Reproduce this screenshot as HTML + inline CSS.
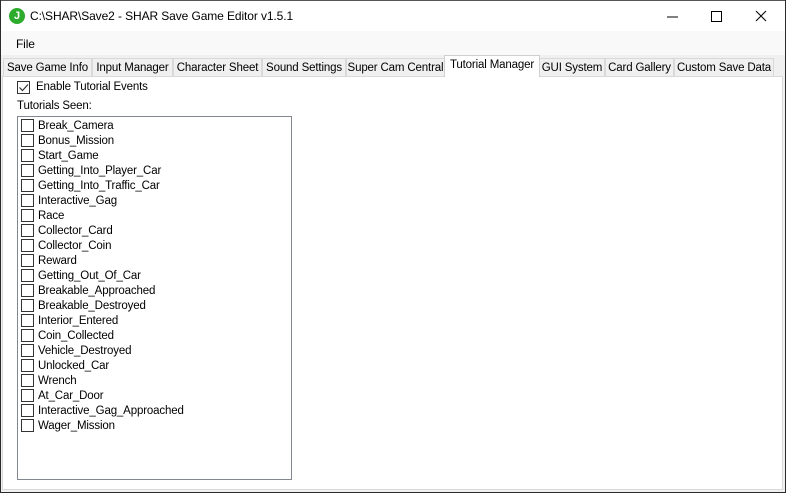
<!DOCTYPE html>
<html><head><style>
*{margin:0;padding:0;box-sizing:border-box}
body{width:786px;height:493px;overflow:hidden;background:#f0f0f0;font-family:"Liberation Sans",sans-serif;font-size:11.5px;letter-spacing:-0.15px;color:#000;position:relative}
.bl{position:absolute;background:#2b2b2b}
.title{position:absolute;left:0;top:0;width:786px;height:31px;background:#fff;border-top:1px solid #555}
.title .t{position:absolute;left:30px;top:8px;font-size:12px;letter-spacing:-0.1px}
.icon{position:absolute;left:9px;top:7px;width:16px;height:16px;border-radius:50%;background:#2dab2d;color:#fff;font-weight:bold;font-size:11px;text-align:center;line-height:16px}
.menu{position:absolute;left:1px;top:31px;width:784px;height:24px;background:#f9f9f9}
.menu span{position:absolute;left:15px;top:6px;font-size:12px}
.tab{position:absolute;top:58px;height:19px;border:1px solid #d9d9d9;border-bottom:none;background:#f0f0f0;text-align:center;line-height:19px;white-space:nowrap;overflow:hidden}
.tab.sel{top:55px;height:22px;background:#fff;border-color:#d0d0d0;z-index:2;line-height:19px}
.panel{position:absolute;left:2px;top:76px;width:781px;height:414px;background:#fff;border:1px solid #d9d9d9}
.cb{position:absolute;width:13px;height:13px;border:1px solid #333;background:#fff}
.list{position:absolute;left:17px;top:116px;width:275px;height:364px;border:1px solid #828790;background:#fff}
.item{position:absolute;left:3px;height:15px}
.item .cb{left:0;top:1px}
.item span{position:absolute;left:17px;top:1px;white-space:nowrap;line-height:15px}
</style></head><body>
<div class="title"><div class="icon">J</div><div class="t">C:\SHAR\Save2 - SHAR Save Game Editor v1.5.1</div>
<svg style="position:absolute;left:660px;top:8px" width="120" height="16"><line x1="7" y1="8" x2="18" y2="8" stroke="#000"/><rect x="51.5" y="2.5" width="10" height="10" fill="none" stroke="#000"/><path d="M96 2L106 12M106 2L96 12" stroke="#000"/></svg></div>
<div class="menu"><span>File</span></div>
<div class="tab" style="left:3px;width:89px">Save Game Info</div>
<div class="tab" style="left:92px;width:81px">Input Manager</div>
<div class="tab" style="left:173px;width:89px">Character Sheet</div>
<div class="tab" style="left:262px;width:84px">Sound Settings</div>
<div class="tab" style="left:346px;width:99px">Super Cam Central</div>
<div class="tab sel" style="left:444px;width:96px">Tutorial Manager</div>
<div class="tab" style="left:539px;width:66px">GUI System</div>
<div class="tab" style="left:605px;width:69px">Card Gallery</div>
<div class="tab" style="left:674px;width:100px">Custom Save Data</div>
<div class="panel"></div>
<div class="cb" style="left:17px;top:81px"><svg width="11" height="11" style="position:absolute;left:0;top:0"><path d="M1.5 5.5L4.5 8.5L10 2.5" fill="none" stroke="#333" stroke-width="1.2"/></svg></div>
<div style="position:absolute;left:36px;top:81px">Enable Tutorial Events</div>
<div style="position:absolute;left:17px;top:100px">Tutorials Seen:</div>
<div class="list">
<div class="item" style="top:1px"><div class="cb"></div><span>Break_Camera</span></div>
<div class="item" style="top:16px"><div class="cb"></div><span>Bonus_Mission</span></div>
<div class="item" style="top:31px"><div class="cb"></div><span>Start_Game</span></div>
<div class="item" style="top:46px"><div class="cb"></div><span>Getting_Into_Player_Car</span></div>
<div class="item" style="top:61px"><div class="cb"></div><span>Getting_Into_Traffic_Car</span></div>
<div class="item" style="top:76px"><div class="cb"></div><span>Interactive_Gag</span></div>
<div class="item" style="top:91px"><div class="cb"></div><span>Race</span></div>
<div class="item" style="top:106px"><div class="cb"></div><span>Collector_Card</span></div>
<div class="item" style="top:121px"><div class="cb"></div><span>Collector_Coin</span></div>
<div class="item" style="top:136px"><div class="cb"></div><span>Reward</span></div>
<div class="item" style="top:151px"><div class="cb"></div><span>Getting_Out_Of_Car</span></div>
<div class="item" style="top:166px"><div class="cb"></div><span>Breakable_Approached</span></div>
<div class="item" style="top:181px"><div class="cb"></div><span>Breakable_Destroyed</span></div>
<div class="item" style="top:196px"><div class="cb"></div><span>Interior_Entered</span></div>
<div class="item" style="top:211px"><div class="cb"></div><span>Coin_Collected</span></div>
<div class="item" style="top:226px"><div class="cb"></div><span>Vehicle_Destroyed</span></div>
<div class="item" style="top:241px"><div class="cb"></div><span>Unlocked_Car</span></div>
<div class="item" style="top:256px"><div class="cb"></div><span>Wrench</span></div>
<div class="item" style="top:271px"><div class="cb"></div><span>At_Car_Door</span></div>
<div class="item" style="top:286px"><div class="cb"></div><span>Interactive_Gag_Approached</span></div>
<div class="item" style="top:301px"><div class="cb"></div><span>Wager_Mission</span></div>
</div>
<div class="bl" style="left:0;top:0;width:1px;height:493px"></div>
<div class="bl" style="left:785px;top:0;width:1px;height:493px"></div>
<div class="bl" style="left:0;top:492px;width:786px;height:1px"></div>
</body></html>
